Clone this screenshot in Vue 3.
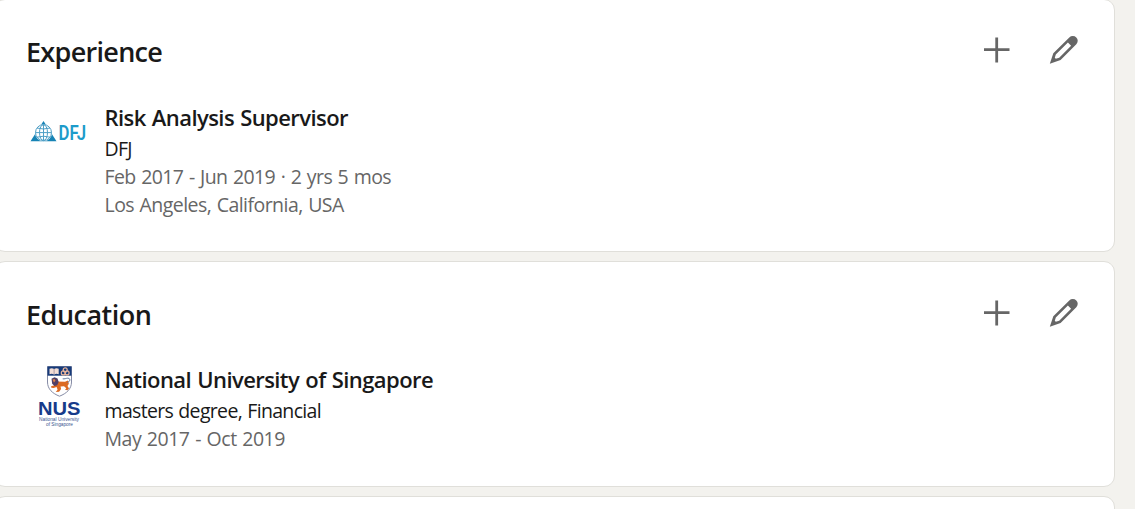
<template>
  <div class="page">
    <section v-for="section in sections" :key="section.id" class="card" :class="section.id">
      <header class="card-header">
        <h2 class="card-title">{{ section.title }}</h2>
        <div class="actions">
          <button type="button" class="action" :aria-label="'Add ' + section.title">
            <svg width="28" height="28" viewBox="0 0 28 28">
              <path d="M13.700 1.500v25M1 13.700h25.500" fill="none" stroke="#666" stroke-width="2.8" />
            </svg>
          </button>
          <button type="button" class="action" :aria-label="'Edit ' + section.title">
            <svg width="30" height="30" viewBox="0 0 30 30">
              <path
                fill="#666"
                fill-rule="evenodd"
                d="M27.300 2.400a4.900 4.900 0 0 0-7 0L4.300 18.200.8 28.800l10.800-3.700 15.700-15.800a4.900 4.900 0 0 0 0-6.900zM10.200 22.700l-3.400 1-1-1 1-3.300L18.900 7.500l3.200 3.200z"
              />
            </svg>
          </button>
        </div>
      </header>

      <div class="entry">
        <div class="logo">
          <svg v-if="section.id === 'experience'" width="66" height="62" viewBox="0 0 66 62">
            <path d="M17.500 16 30.500 36.300h-26z" fill="#1683b5" />
            <circle cx="17.500" cy="27.600" r="8.600" fill="#fff" />
            <g fill="none" stroke="#4f9fc6" stroke-width="1">
              <circle cx="17.500" cy="27.600" r="8" />
              <ellipse cx="17.500" cy="27.600" rx="4" ry="8" />
              <path d="M17.500 19.600v16M9.500 27.600h16M11 23q6.500 2 13 0M11 32.200q6.500-2 13 0" />
            </g>
            <text class="dfj-text" x="32.500" y="35" textLength="27.500" lengthAdjust="spacingAndGlyphs">DFJ</text>
          </svg>
          <svg v-else width="66" height="66" viewBox="0 0 66 66">
            <g transform="translate(1 -1)">
              <path d="M20.500 2.500h24V18c0 7-5 11.500-12 14.200C25.500 29.500 20.500 25 20.500 18z" fill="#fff" stroke="#858ba5" stroke-width="1" />
              <path d="M20.500 2.500h24v9.200h-24z" fill="#173b7a" />
              <path d="M22.500 4.800q2.500-1 4.600.2 2.200-1.200 4.600-.2v5.400q-2.500-.8-4.600.3-2.200-1.100-4.600-.3z" fill="#f3ded6" />
              <path d="M27.100 5v5.500" stroke="#8a7d91" stroke-width=".7" />
              <g fill="none" stroke="#e7b49c" stroke-width="1.200">
                <circle cx="38.200" cy="5.900" r="2" />
                <circle cx="36.300" cy="8.900" r="2" />
                <circle cx="40.100" cy="8.900" r="2" />
              </g>
              <!-- lion -->
              <path
                d="M29 17.500l9 .3 3-1.300.8 3.300-1.300 2.200 1.500 2.600-1.600 1.600-2.400-.5 1.300-1.500-2.300-2-3.500.3.600 2.500-2 2.700-3.300.4 1.800-2.300-1-2.800-3 1-2.300-.3-.2-1.400 3.600-1z"
                fill="#dc6a22"
              />
              <path d="M24.500 14.800l3-1.500 3 1.200 1.200 3.500-1.500 3.300-2.800.8-2.200-2.400z" fill="#514067" />
              <path d="M25.500 15.500l2-.5 1 1.800-1.600 1.700z" fill="#d9804a" />
              <path d="M40.500 18.500c3.500-1.500 2.800-4.500.2-4.300-1.500 0-3.200 1-5 .6" fill="none" stroke="#60769c" stroke-width="1" />
            </g>
            <text class="nus-text" x="12" y="49.500" textLength="42.500" lengthAdjust="spacingAndGlyphs">NUS</text>
            <text class="nus-caption" x="13" y="56" textLength="40" lengthAdjust="spacingAndGlyphs">National University</text>
            <text class="nus-caption" x="20" y="61.300" textLength="27" lengthAdjust="spacingAndGlyphs">of Singapore</text>
          </svg>
        </div>
        <div class="details">
          <h3 class="entry-title">{{ section.name }}</h3>
          <p class="subtitle">{{ section.subtitle }}</p>
          <p class="meta dates">{{ section.dates }}</p>
          <p v-if="section.location" class="meta location">{{ section.location }}</p>
        </div>
      </div>
    </section>
    <section class="card next"></section>
  </div>
</template>

<script setup>
const sections = [
  {
    id: 'experience',
    title: 'Experience',
    name: 'Risk Analysis Supervisor',
    subtitle: 'DFJ',
    dates: 'Feb 2017 - Jun 2019 · 2 yrs 5 mos',
    location: 'Los Angeles, California, USA'
  },
  {
    id: 'education',
    title: 'Education',
    name: 'National University of Singapore',
    subtitle: 'masters degree, Financial',
    dates: 'May 2017 - Oct 2019'
  }
]
</script>

<style>
body {
  margin: 0;
  background: #f3f2ee;
}
</style>

<style scoped>
.page {
  height: 509px;
  overflow: hidden;
  display: flex;
  flex-direction: column;
  gap: 9px;
  background: #f3f2ee;
  font-family: "Segoe UI", "Open Sans", "Noto Sans", sans-serif;
}

.card {
  box-sizing: border-box;
  flex: none;
  width: 1121px;
  margin-left: -6px;
  padding: 0 35px 0 31px;
  background: #fff;
  border: 1px solid #e0dfda;
  border-radius: 11px;
}

.experience {
  height: 253px;
  margin-top: -1px;
}

.education {
  height: 226px;
}

.next {
  height: 40px;
}

.card-header {
  display: flex;
  justify-content: space-between;
  padding-top: 34px;
  height: 40px;
}

.card-title {
  margin: 0;
  font-size: 27px;
  line-height: 36px;
  font-weight: 600;
  letter-spacing: -0.7px;
  color: #191919;
}

.education .card-title {
  line-height: 38px;
  letter-spacing: -0.5px;
}

.actions {
  display: flex;
  gap: 38px;
  height: 32px;
  align-items: center;
}

.education .actions {
  height: 34px;
}

.action {
  display: flex;
  padding: 0;
  border: 0;
  background: none;
}

.entry {
  display: flex;
  padding-top: 28px;
}

.logo {
  flex: none;
  width: 78.5px;
}

.logo svg {
  display: block;
  overflow: visible;
}

.experience .logo {
  padding-top: 3px;
}

.education .logo {
  padding-top: 1px;
}

.dfj-text {
  font: 600 20px Roboto, sans-serif;
  fill: #1c9bca;
}

.nus-text {
  font: 700 19px "Liberation Sans", sans-serif;
  fill: #173b8a;
}

.nus-caption {
  font: 4.8px "Liberation Sans", sans-serif;
  fill: #3a5490;
}

.entry-title,
.subtitle,
.meta {
  margin: 0;
  white-space: nowrap;
}

.entry-title {
  padding-bottom: 2px;
  font-size: 22px;
  line-height: 31px;
  font-weight: 600;
  letter-spacing: -0.57px;
  word-spacing: 1px;
  color: #191919;
}

.subtitle,
.meta {
  font-size: 19.5px;
  line-height: 28px;
}

.subtitle {
  letter-spacing: -0.67px;
  word-spacing: 0.8px;
  color: #191919;
}

.meta {
  color: #666;
}

.dates {
  letter-spacing: -0.61px;
  word-spacing: 1.1px;
}

.education .dates {
  letter-spacing: -0.49px;
}

.location {
  letter-spacing: -0.55px;
  word-spacing: 1px;
}
</style>
